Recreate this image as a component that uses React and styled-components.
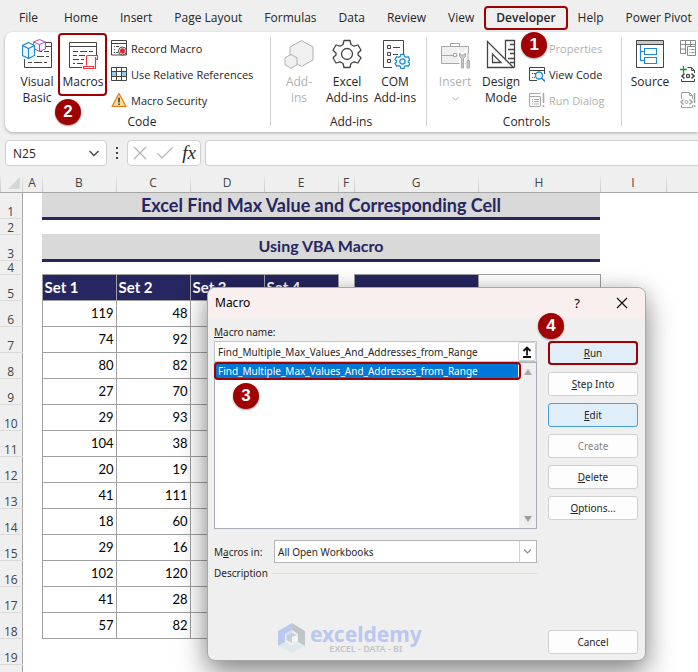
import React, { useState } from "react";
import styled, { createGlobalStyle } from "styled-components";

const GlobalStyle = createGlobalStyle`
  * {
    box-sizing: border-box;
  }
  body {
    margin: 0;
    background: #efefef;
    font-family: "Open Sans", "Noto Sans", sans-serif;
    font-size: 12px;
    color: #262626;
  }
  button, input, select {
    font: inherit;
    color: inherit;
  }
`;

const Window = styled.div`
  position: relative;
  display: flex;
  flex-direction: column;
  height: 100vh;
  overflow: hidden;
`;

/* red frame drawn over a control, with its step number */
const Frame = styled.span`
  position: absolute;
  inset: ${(p) => p.$inset};
  border: 2px solid #a00000;
  border-radius: 4px;
  pointer-events: none;
`;
const Badge = styled.span`
  position: absolute;
  left: ${(p) => p.$left};
  top: ${(p) => p.$top};
  z-index: 2;
  width: 26px;
  height: 26px;
  border-radius: 50%;
  background: #a00000;
  box-shadow: 0 1px 2px rgba(0, 0, 0, 0.4);
  color: #fff;
  font-family: "Liberation Sans", Arial, sans-serif;
  font-size: 17px;
  font-weight: 700;
  line-height: 26px;
  text-align: center;
`;

const TabBar = styled.nav`
  display: flex;
  align-items: center;
  gap: 22px;
  height: 32px;
  padding: 3px 0 0 19px;
`;
const Tab = styled.button`
  position: relative;
  padding: 0;
  border: none;
  background: none;
  font-weight: ${(p) => (p.$active ? 600 : 400)};
  line-height: 20px;
  white-space: nowrap;
  box-shadow: ${(p) => (p.$active ? "0 1px 0 #185c37" : "none")};
  &:first-child {
    margin-right: 4px;
  }
`;

const Ribbon = styled.section`
  display: flex;
  flex: none;
  height: 100px;
  margin-left: 5px;
  background: #fff;
  border-radius: 8px 0 0 8px;
  box-shadow: 0 1px 3px rgba(0, 0, 0, 0.3);
`;
const Group = styled.div`
  position: relative;
  display: flex;
  flex: none;
  flex-direction: column;
  width: ${(p) => p.$width};
  padding: 3px 0 2px ${(p) => p.$indent || "4px"};
  &:not(:last-child)::after {
    content: "";
    position: absolute;
    top: 5px;
    right: 0;
    bottom: 6px;
    border-right: 1px solid #d0d0d0;
  }
`;
const GroupBody = styled.div`
  display: flex;
  flex: 1;
`;
const GroupLabel = styled.div`
  line-height: 16px;
  text-align: center;
`;
const BigButton = styled.button`
  position: relative;
  display: flex;
  flex-direction: column;
  align-items: center;
  gap: 5px;
  width: ${(p) => p.$width || "48px"};
  padding: 4px 0 0;
  border: none;
  background: none;
  line-height: 16px;
  color: ${(p) => (p.disabled ? "#b0b0b0" : "inherit")};
  svg {
    flex: none;
  }
`;
const SmallList = styled.div`
  display: flex;
  flex-direction: column;
  padding-left: 6px;
`;
const SmallButton = styled.button`
  position: relative;
  display: flex;
  align-items: center;
  gap: 4px;
  height: 26px;
  padding: 0;
  border: none;
  background: none;
  font-size: 11px;
  white-space: nowrap;
  color: ${(p) => (p.disabled ? "#b0b0b0" : "inherit")};
`;

const FormulaBar = styled.div`
  display: flex;
  flex: none;
  height: 42px;
  padding: 8px 0 8px 5px;
`;
const NameBox = styled.label`
  display: flex;
  align-items: center;
  width: 102px;
  padding: 0 7px;
  border: 1px solid #d0d0d0;
  border-radius: 4px;
  background: #fff;
  input {
    flex: 1;
    min-width: 0;
    padding: 0;
    border: none;
    outline: none;
    background: none;
  }
`;
const Dots = styled.div`
  display: flex;
  flex-direction: column;
  align-items: center;
  justify-content: center;
  gap: 3px;
  width: 20px;
  i {
    width: 2px;
    height: 2px;
    background: #444;
  }
`;
const FxBox = styled.div`
  display: flex;
  align-items: center;
  justify-content: space-between;
  width: 74px;
  padding: 0 4px;
  border: 1px solid #d0d0d0;
  border-radius: 4px;
  background: #fff;
`;
const FxButton = styled.button`
  display: flex;
  padding: 0;
  border: none;
  background: none;
  font-family: "Liberation Serif", serif;
  font-size: 19px;
  font-style: italic;
  line-height: 22px;
`;
const FormulaInput = styled.input`
  flex: 1;
  margin-left: 4px;
  border: 1px solid #d0d0d0;
  border-right: none;
  border-radius: 4px 0 0 4px;
  background: #fff;
  outline: none;
`;

const SheetArea = styled.div`
  flex: 1;
  overflow: hidden;
  background: #fff;
`;
const Sheet = styled.table`
  width: 740px;
  table-layout: fixed;
  border-collapse: collapse;
  font-family: Lato, Carlito, sans-serif;
  font-size: 13px;
  color: #000;
  th,
  td {
    padding: 0 2px;
    overflow: hidden;
    white-space: nowrap;
  }
`;
const ColHead = styled.th`
  height: 18px;
  background: linear-gradient(#efefef, #c8c8c8) left / 1px 100% no-repeat #efefef;
  border-bottom: 1px solid #a6a6a6;
  font-family: "Open Sans", "Noto Sans", sans-serif;
  font-size: 12px;
  font-weight: 400;
  line-height: 16px;
  color: #444;
  svg {
    display: block;
    margin-left: auto;
  }
`;
const RowHead = styled.th`
  background: #efefef;
  border-right: 1px solid #a6a6a6;
  border-bottom: 1px solid #dadada;
  font-family: "Open Sans", "Noto Sans", sans-serif;
  font-size: 12px;
  font-weight: 400;
  line-height: 12px;
  vertical-align: bottom;
  color: #444;
`;
const Row = styled.tr`
  height: ${(p) => p.$height || "26px"};
`;
const Banner = styled.td`
  background: #d9d9d9;
  border-bottom: 3px solid #262660;
  font-size: ${(p) => p.$size};
  font-weight: 700;
  line-height: 22px;
  text-align: center;
  color: #262660;
`;
const SetHead = styled.th`
  background: ${(p) => (p.$empty ? "#fff" : "#262660")};
  border: 1px solid #a0a0a0;
  font-size: 15px;
  font-weight: 700;
  text-align: left;
  color: #fff;
`;
const Cell = styled.td`
  border: 1px solid #a0a0a0;
  text-align: right;
`;

const Dialog = styled.div`
  position: absolute;
  left: 207px;
  top: 287px;
  display: flex;
  flex-direction: column;
  width: 439px;
  height: 374px;
  border: 1px solid #a8a8a8;
  border-radius: 8px;
  background: #efefef;
  box-shadow: 0 14px 30px rgba(0, 0, 0, 0.38), 0 2px 20px rgba(0, 0, 0, 0.18);
  font-family: "Noto Sans", "Open Sans", sans-serif;
  font-size: 10px;
`;
const TitleBar = styled.header`
  display: flex;
  align-items: center;
  height: 29px;
  padding: 0 17px 0 7px;
  border-radius: 8px 8px 0 0;
  background: #f9efef;
  color: #000;
  h2 {
    flex: 1;
    margin: 0;
    font-size: 12px;
    font-weight: 400;
  }
`;
const TitleButton = styled.button`
  display: flex;
  justify-content: center;
  width: 12px;
  margin-left: 33px;
  padding: 0;
  border: none;
  background: none;
  font-size: 13px;
`;
const DialogBody = styled.div`
  display: flex;
  flex: 1;
  gap: 11px;
  padding: 7px 7px 6px 6px;
`;
const Main = styled.div`
  display: flex;
  flex: 1;
  flex-direction: column;
  min-width: 0;
`;
const FieldLabel = styled.label`
  line-height: 16px;
`;
const NameRow = styled.div`
  display: flex;
  height: 21px;
  margin-top: 1px;
  border: 1px solid #c2c4cc;
  background: #fff;
  input {
    flex: 1;
    padding: 0 3px;
    border: none;
    outline: none;
    background: none;
  }
  button {
    display: flex;
    align-items: center;
    justify-content: center;
    width: 18px;
    padding: 0;
    border: 1px solid #d0d0d0;
    border-radius: 2px;
    background: #fff;
  }
`;
const ListFrame = styled.div`
  position: relative;
  display: flex;
  height: 167px;
  border: 1px solid #a8adb8;
  background: #fff;
`;
const List = styled.ul`
  flex: 1;
  margin: 0;
  padding: 0 1px;
  list-style: none;
`;
const Option = styled.li`
  position: relative;
  padding: 0 2px;
  background: #0078d7;
  line-height: 16px;
  color: #fff;
`;
const ScrollBar = styled.div`
  display: flex;
  flex-direction: column;
  align-items: center;
  justify-content: space-between;
  width: 17px;
  padding: 6px 0;
  background: #efefef;
`;
const MacrosIn = styled.div`
  display: flex;
  align-items: center;
  margin-top: 11px;
  label {
    width: 60px;
  }
`;
const SelectBox = styled.div`
  position: relative;
  display: flex;
  flex: 1;
  height: 23px;
  border: 1px solid #b4b4ba;
  background: #fff;
  select {
    flex: 1;
    padding: 0 3px;
    border: none;
    outline: none;
    background: none;
    appearance: none;
  }
  svg {
    position: absolute;
    right: 0;
    top: 0;
    pointer-events: none;
  }
`;
const Description = styled.div`
  display: flex;
  align-items: center;
  gap: 4px;
  margin-top: 2px;
  line-height: 16px;
  &::after {
    content: "";
    flex: 1;
    border-top: 1px solid #dcdcdc;
  }
`;
const Watermark = styled.div`
  display: flex;
  align-items: center;
  gap: 4px;
  margin-top: auto;
  margin-left: 64px;
  p {
    margin: 0;
    color: #b9c8ee;
    font-size: 21px;
    font-weight: 700;
    line-height: 20px;
  }
  small {
    display: block;
    color: #bfc4c9;
    font-size: 9px;
    font-weight: 600;
    line-height: 9px;
    text-align: center;
  }
`;
const Side = styled.div`
  display: flex;
  flex-direction: column;
  gap: 7px;
  width: 90px;
  padding-top: 17px;
`;
const DialogButton = styled.button`
  position: relative;
  height: 24px;
  padding: 0;
  border: 1px solid ${(p) => (p.$blue ? "#4a9fe0" : "#d0d0d0")};
  border-radius: 3px;
  background: ${(p) => (p.$blue ? "#e0eef9" : "#fdfdfd")};
  color: ${(p) => (p.disabled ? "#838383" : "#262626")};
  &:last-child {
    margin-top: auto;
  }
`;

const Page = ({ children, ...rest }) => (
  <svg width="30" height="30" viewBox="0 0 30 30" fill="none" stroke="#444" {...rest}>
    {children}
  </svg>
);

const VisualBasicIcon = () => (
  <Page>
    <path d="M24 3.5H29.5V28.5H2.5V20" />
    <path d="M23 7.5H29" />
    <path d="M17 12.5h3m2 0h5M15 17.5h7m2 0h3M6 23.5h4m2 0h8m2 0h3" />
    <path d="M17.5 .5L23.5 3V10L17.5 12.5L11.5 9.5V3ZM11.5 3L17.5 5.5L23.5 3M17.5 5.5V12" stroke="#ab4fb8" fill="#fbf2fc" />
    <path d="M6.5 3.5L12.5 6.5V16.5L6.5 19.5L.5 16.5V6.5ZM.5 6.5L6.5 9.5L12.5 6.5M6.5 9.5V19" stroke="#1e8bcd" fill="#eef8fe" strokeWidth="1.2" />
  </Page>
);
const MacrosIcon = () => (
  <Page>
    <path d="M14 28.5H1.5V3.5H28.5V16M1.5 7.5H28.5" />
    <path d="M5 12.5h5m2 0h7m2 0h4M5 16.5h4m2 0h6M5 20.5h6m2 0h3M5 24.5h2m2 0h6" />
    <path
      d="M18.5 26.500V18C18.500 17 19 16.500 20 16.500H29.500V20.500H27.500M27.500 18V29C27.500 30.500 25.500 30.500 25.500 29V27.500H15.500V29.500H26"
      stroke="#ee3338"
      fill="#fff"
      strokeWidth="1.200"
    />
  </Page>
);
const HexagonsIcon = () => (
  <Page stroke="#b0b0b0" fill="#f0f0f0">
    <path d="M17.5 1.5L29 8V21L17.5 27.5L6 21V8Z" />
    <path d="M7 15.5L13 18.8V25.8L7 29.3L1 25.8V18.8Z" />
  </Page>
);
const gear =
  "M12 1.5H18L19 5.5L22 7.2L26 6L29 11.2L26 14V16L29 18.8L26 24L22 22.8L19 24.5L18 28.5H12L11 24.5L8 22.8L4 24L1 18.8L4 16V14L1 11.2L4 6L8 7.2L11 5.5Z";
const GearIcon = () => (
  <Page strokeWidth="1.3">
    <path d={gear} strokeLinejoin="round" />
    <circle cx="15" cy="15" r="5.5" />
  </Page>
);
const ComIcon = () => (
  <Page>
    <path d="M12 28.5H3.5V1.5H23.5V15" />
    <path d="M7.500 6.500h3v3h-3zM7.500 13.500h3v3h-3zM7.500 20.500h3v3h-3zM13 8.500h7M13 15.500h5" />
    <g transform="translate(14.500 14.500) scale(.53)" stroke="#1e8bcd" strokeWidth="2.400">
      <path d={gear} fill="#f2f9fe" />
      <circle cx="15" cy="15" r="5" />
    </g>
  </Page>
);
const ToolboxIcon = () => (
  <Page stroke="#a8a8a8">
    <path d="M1.500 7.500H28.500V24.500H1.500Z" fill="#efefef" />
    <path d="M10.500 7V4.500H19.500V7M1 16.500H13M17 16.500H20" />
    <path d="M13.500 14.500h3v3h-3z" fill="#fff" />
    <path d="M19.500 14V17.500L21.500 19.500V29H23.500V19.500L25.500 17.500V14L23.500 16H21.500Z" stroke="#fff" strokeWidth="4" />
    <path d="M28 14v15" stroke="#fff" strokeWidth="4" />
    <path d="M19.500 14V17.500L21.500 19.500V29H23.500V19.500L25.500 17.500V14L23.500 16H21.500Z" fill="#ccc" />
    <path d="M28 14v7M27 21.500h2.500V29H27Z" fill="#ccc" />
  </Page>
);
const DesignIcon = () => (
  <Page strokeWidth="1.300">
    <path d="M19.500 20V1.500H28.500V28.500M24 5.500h4M22 10.500h6M24 14.500h4M22 19.500h6M24 23.500h4" />
    <path d="M1.500 2.500V28.500H27.500Z" fill="#fff" />
    <path d="M6.500 15V23.500H15Z" />
  </Page>
);
const SourceIcon = () => (
  <Page>
    <path d="M1.500 1.500H28.500V28.500H1.500Z" />
    <path d="M2 2H28V5.500H2Z" fill="#c8c8c8" stroke="none" />
    <path d="M1.500 5.500H28.500" />
    <path d="M5.500 6V21.500H10M5.500 12.500H10M9.500 9.500H21.500V15.500H9.500ZM9.500 18.500H21.500V24.500H9.500Z" stroke="#1e8bcd" strokeWidth="1.200" />
  </Page>
);

const Small = ({ children, ...rest }) => (
  <svg width="16" height="16" viewBox="0 0 16 16" fill="none" stroke="#444" {...rest}>
    {children}
  </svg>
);
const RecordIcon = () => (
  <Small>
    <path d="M.5 .5H15.500V15H.5ZM.5 3.500H15.500" />
    <path d="M3 6.500h1m1 0h3M3 9.500h1M3 12.500h1m1 0h2" />
    <circle cx="11.500" cy="11" r="4" fill="#fff" />
    <circle cx="11.500" cy="11" r="2.300" fill="#e8262c" stroke="#e8262c" />
  </Small>
);
const GridIcon = () => (
  <Small>
    <path d="M.5 5.500H15.500V10.500H.5Z" fill="#8fcbf2" />
    <path d="M6 6H10V10H6Z" fill="#fff" stroke="none" />
    <path d="M.5 1.500H15.500V14.500H.5ZM.5 5.500H15.500M.5 10.500H15.500M5.500 1.500V14.500M10.500 1.500V14.500" />
  </Small>
);
const WarningIcon = () => (
  <Small>
    <path d="M8 1.500L15 14.500H1Z" fill="#fbdc93" stroke="#e07b12" strokeWidth="1.200" strokeLinejoin="round" />
    <path d="M8 5.500V10.500M8 11.500V13" stroke="#333" strokeWidth="1.500" />
  </Small>
);
const PropertiesIcon = () => (
  <Small stroke="#a8a8a8">
    <path d="M.5 1.500H10.500V14.500H.5ZM.5 4.500H10.500" />
  </Small>
);
const ViewCodeIcon = () => (
  <Small>
    <path d="M8 14.500H.5V1.500H15.500V8M.5 4.500H15.500" />
    <path d="M3 7.500h1m1 0h2M3 11.500h1m1 0h1" />
    <circle cx="10" cy="9.500" r="3.500" stroke="#1e8bcd" fill="#eaf5fd" strokeWidth="1.300" />
    <path d="M12.500 12L16 15.500" stroke="#1e8bcd" strokeWidth="1.600" />
  </Small>
);
const RunDialogIcon = () => (
  <Small stroke="#a8a8a8">
    <path d="M11 14.500H.5V1.500H11.500M.5 4.500H11.500V14M3 7.500h1m1 0h5M3 9.500h1m1 0h5M3 12h1m1 0h5" />
    <path d="M14.500 1V11M14.500 13V15" strokeWidth="1.600" />
  </Small>
);
const MapIcon = () => (
  <Small stroke="#8a8a8a">
    <path d="M6 13.500H.5V.5H15.500V6M.5 4.500H16M5.500 .5V13M.5 9H6M10.500 .5V6" />
    <path d="M7.500 6.500H15.500V15.500H7.500ZM9.500 9.500h1m1 0h3M9.500 12.500h1m1 0h3" />
  </Small>
);
const ExpansionIcon = () => (
  <Small>
    <path d="M7.500 1.500H11.500L14.500 4.500V7M11.500 1.500V4.500H14.500M1.500 7V13.500V15.500H14.500V13" />
    <path d="M0 7H16V13H0Z" fill="#fff" stroke="none" />
    <path d="M4.500 7.500L2 10L4.500 12.500M11.500 7.500L14 10L11.500 12.500" strokeWidth="1.600" />
    <circle cx="8" cy="10" r="1.600" strokeWidth="1.300" />
    <path d="M3.500 0V7M0 3.500H7" stroke="#1d9140" strokeWidth="1.300" />
  </Small>
);
const RefreshIcon = () => (
  <Small stroke="#a0a0a0">
    <path d="M1.500 7V.5H9.500L12.500 3.500V7M1.500 13V15.500H12.500V13M9.500 .5V3.500H12.500" />
    <path d="M3.500 7.500L1 10L3.500 12.500M9.500 7.500L12 10L9.500 12.500" strokeWidth="1.500" />
    <circle cx="6.500" cy="10" r="1.500" />
    <path d="M14.500 1V11M14.500 13V15" strokeWidth="1.600" />
  </Small>
);
const Chevron = ({ size = 10, color = "#444" }) => (
  <svg width={size} height={size} viewBox="0 0 10 10" fill="none" stroke={color} strokeWidth="1.300">
    <path d="M.5 3L5 7.500L9.500 3" />
  </svg>
);

const tabs = ["File", "Home", "Insert", "Page Layout", "Formulas", "Data", "Review", "View", "Developer", "Help", "Power Pivot"];
const widths = [22, 20, 74, 74, 74, 74, 16, 124, 122, 66, 74];
const values = [
  [119, 48],
  [74, 92],
  [80, 82],
  [27, 70],
  [29, 93],
  [104, 38],
  [20, 19],
  [41, 111],
  [18, 60],
  [29, 16],
  [102, 120],
  [41, 28],
  [57, 82],
];

const MacroDialog = () => {
  const macro = "Find_Multiple_Max_Values_And_Addresses_from_Range";
  const [name, setName] = useState(macro);

  return (
    <Dialog role="dialog" aria-labelledby="dialog-title">
      <TitleBar>
        <h2 id="dialog-title">Macro</h2>
        <TitleButton>?</TitleButton>
        <TitleButton aria-label="Close">
          <svg width="12" height="12" viewBox="0 0 12 12" stroke="#111" strokeWidth="1.200">
            <path d="M1 1L11 11M11 1L1 11" />
          </svg>
        </TitleButton>
      </TitleBar>
      <DialogBody>
        <Main>
          <FieldLabel htmlFor="macro-name">
            <u>M</u>acro name:
          </FieldLabel>
          <NameRow>
            <input id="macro-name" value={name} onChange={(e) => setName(e.target.value)} />
            <button aria-label="Collapse">
              <svg width="10" height="12" viewBox="0 0 10 12" fill="none" stroke="#111" strokeWidth="1.800">
                <path d="M5 9.500V2M1.500 5L5 1.500L8.500 5M1 11H9" />
              </svg>
            </button>
          </NameRow>
          <ListFrame>
            <List role="listbox" aria-label="Macros">
              <Option role="option" aria-selected="true" onClick={() => setName(macro)}>
                {macro}
                <Frame $inset="-1px -3px -1px -2px" />
                <Badge $left="17px" $top="20px">
                  3
                </Badge>
              </Option>
            </List>
            <ScrollBar>
              <svg width="8" height="6" viewBox="0 0 8 6" fill="#a8a8a8">
                <path d="M4 0L8 6H0Z" />
              </svg>
              <svg width="8" height="6" viewBox="0 0 8 6" fill="#a0a0a0">
                <path d="M0 0H8L4 6Z" />
              </svg>
            </ScrollBar>
          </ListFrame>
          <MacrosIn>
            <FieldLabel htmlFor="macros-in">
              M<u>a</u>cros in:
            </FieldLabel>
            <SelectBox>
              <select id="macros-in">
                <option>All Open Workbooks</option>
              </select>
              <svg width="17" height="21" viewBox="0 0 17 21" fill="none" stroke="#8c8c8c">
                <path d="M.5 0V21" stroke="#d0d0d0" />
                <path d="M5 8.500L8.500 12L12 8.500" strokeWidth="1.200" />
              </svg>
            </SelectBox>
          </MacrosIn>
          <Description>Description</Description>
          <Watermark>
            <svg width="28" height="32" viewBox="0 0 28 32">
              <path d="M14 1L0 9V24L7 20V12L14 8Z" fill="#b9c8ee" />
              <path d="M14 1L27 9V24L20 20V12L14 8Z" fill="#bfc5c9" />
              <path d="M0 24L7 20L14 24L20 20L27 24L14 31Z" fill="#dfe8ea" />
              <path d="M14 8L8 12V19L14 15Z" fill="#d5dcf0" />
              <path d="M14 11L19 13V19L14 21L9 18V14Z" fill="#c8ced2" />
              <path d="M14 15L19 13V19L14 21Z" fill="#f4f6f7" />
            </svg>
            <div>
              <p>exceldemy</p>
              <small>EXCEL - DATA - BI</small>
            </div>
          </Watermark>
        </Main>
        <Side>
          <DialogButton $blue>
            <u>R</u>un
            <Frame $inset="-1px" />
            <Badge $left="-11px" $top="-29px">
              4
            </Badge>
          </DialogButton>
          <DialogButton>
            <u>S</u>tep Into
          </DialogButton>
          <DialogButton $blue>
            <u>E</u>dit
          </DialogButton>
          <DialogButton disabled>Create</DialogButton>
          <DialogButton>
            <u>D</u>elete
          </DialogButton>
          <DialogButton>
            <u>O</u>ptions...
          </DialogButton>
          <DialogButton>Cancel</DialogButton>
        </Side>
      </DialogBody>
    </Dialog>
  );
};

const App = () => {
  const [cell, setCell] = useState("N25");
  const [formula, setFormula] = useState("");

  return (
    <Window>
      <GlobalStyle />
      <TabBar>
        {tabs.map((tab) => (
          <Tab key={tab} $active={tab === "Developer"}>
            {tab}
            {tab === "Developer" && (
              <>
                <Frame $inset="-2px -12px" />
                <Badge $left="25px" $top="24px">
                  1
                </Badge>
              </>
            )}
          </Tab>
        ))}
      </TabBar>

      <Ribbon>
        <Group $width="266px" $indent="8px">
          <GroupBody>
            <BigButton>
              <VisualBasicIcon />
              Visual Basic
            </BigButton>
            <BigButton $width="44px">
              <MacrosIcon />
              Macros
              <Frame $inset="-2px -2px 18px -3px" />
              <Badge $left="-6px" $top="64px">
                2
              </Badge>
            </BigButton>
            <SmallList>
              <SmallButton>
                <RecordIcon />
                Record Macro
              </SmallButton>
              <SmallButton>
                <GridIcon />
                Use Relative References
              </SmallButton>
              <SmallButton>
                <WarningIcon />
                Macro Security
              </SmallButton>
            </SmallList>
          </GroupBody>
          <GroupLabel>Code</GroupLabel>
        </Group>
        <Group $width="156px">
          <GroupBody>
            <BigButton disabled>
              <HexagonsIcon />
              Add-
              <br />
              ins
            </BigButton>
            <BigButton>
              <GearIcon />
              Excel Add-ins
            </BigButton>
            <BigButton>
              <ComIcon />
              COM Add-ins
            </BigButton>
          </GroupBody>
          <GroupLabel>Add-ins</GroupLabel>
        </Group>
        <Group $width="195px">
          <GroupBody>
            <BigButton disabled>
              <ToolboxIcon />
              Insert
              <Chevron size={7} color="#a8a8a8" />
            </BigButton>
            <BigButton $width="44px">
              <DesignIcon />
              Design Mode
            </BigButton>
            <SmallList>
              <SmallButton disabled>
                <PropertiesIcon />
                Properties
              </SmallButton>
              <SmallButton>
                <ViewCodeIcon />
                View Code
              </SmallButton>
              <SmallButton disabled>
                <RunDialogIcon />
                Run Dialog
              </SmallButton>
            </SmallList>
          </GroupBody>
          <GroupLabel>Controls</GroupLabel>
        </Group>
        <Group $width="auto">
          <GroupBody>
            <BigButton>
              <SourceIcon />
              Source
            </BigButton>
            <SmallList>
              <SmallButton aria-label="Map Properties">
                <MapIcon />
              </SmallButton>
              <SmallButton aria-label="Expansion Packs">
                <ExpansionIcon />
              </SmallButton>
              <SmallButton aria-label="Refresh Data">
                <RefreshIcon />
              </SmallButton>
            </SmallList>
          </GroupBody>
        </Group>
      </Ribbon>

      <FormulaBar>
        <NameBox>
          <input aria-label="Name box" value={cell} onChange={(e) => setCell(e.target.value)} />
          <Chevron />
        </NameBox>
        <Dots>
          <i />
          <i />
          <i />
        </Dots>
        <FxBox>
          <FxButton aria-label="Cancel entry">
            <svg width="16" height="16" viewBox="0 0 16 16" stroke="#b4b4b4" strokeWidth="1.200">
              <path d="M2 2L14 14M14 2L2 14" />
            </svg>
          </FxButton>
          <FxButton aria-label="Enter">
            <svg width="18" height="16" viewBox="0 0 18 16" fill="none" stroke="#b4b4b4" strokeWidth="1.200">
              <path d="M1.500 8.500L6 13L16.500 2.500" />
            </svg>
          </FxButton>
          <FxButton>fx</FxButton>
        </FxBox>
        <FormulaInput aria-label="Formula" value={formula} onChange={(e) => setFormula(e.target.value)} />
      </FormulaBar>

      <SheetArea>
        <Sheet>
          <colgroup>
            {widths.map((w, i) => (
              <col key={i} width={w} />
            ))}
          </colgroup>
          <thead>
            <tr>
              <ColHead>
                <svg width="12" height="12" viewBox="0 0 12 12" fill="#d6d6d6">
                  <path d="M12 0V12H0Z" />
                </svg>
              </ColHead>
              {"ABCDEFGHIJ".split("").map((c) => (
                <ColHead key={c}>{c}</ColHead>
              ))}
            </tr>
          </thead>
          <tbody>
            <Row>
              <RowHead>1</RowHead>
              <td />
              <Banner colSpan={7} $size="18px">
                Excel Find Max Value and Corresponding Cell
              </Banner>
            </Row>
            <Row $height="16px">
              <RowHead>2</RowHead>
            </Row>
            <Row>
              <RowHead>3</RowHead>
              <td />
              <Banner colSpan={7} $size="16px">
                Using VBA Macro
              </Banner>
            </Row>
            <Row $height="14px">
              <RowHead>4</RowHead>
            </Row>
            <Row>
              <RowHead>5</RowHead>
              <td />
              <SetHead>Set 1</SetHead>
              <SetHead>Set 2</SetHead>
              <SetHead>Set 3</SetHead>
              <SetHead>Set 4</SetHead>
              <td />
              <SetHead />
              <SetHead $empty />
            </Row>
            {values.map(([b, c], i) => (
              <Row key={i}>
                <RowHead>{i + 6}</RowHead>
                <td />
                <Cell>{b}</Cell>
                <Cell>{c}</Cell>
                <Cell />
                <Cell />
              </Row>
            ))}
            <Row>
              <RowHead>19</RowHead>
            </Row>
            <Row>
              <RowHead />
            </Row>
          </tbody>
        </Sheet>
      </SheetArea>

      <MacroDialog />
    </Window>
  );
};

export default App;
